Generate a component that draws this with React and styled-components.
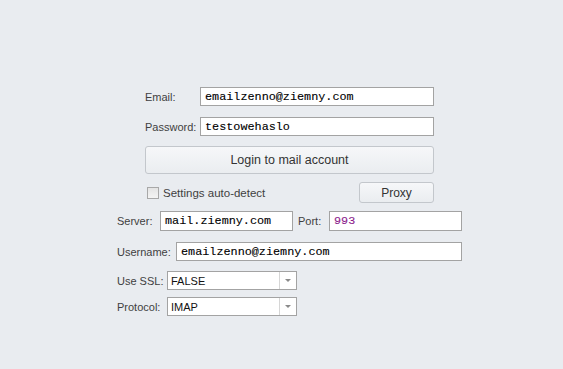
import React from 'react';
import styled, { createGlobalStyle } from 'styled-components';

const GlobalStyle = createGlobalStyle`
    html, body {
        margin: 0;
        background: #e9ecf0;
    }
    body {
        font-family: "Liberation Sans", Arial, sans-serif;
        font-size: 11px;
        color: #3c3c3c;
    }
`;

const Page = styled.div`
    width: 563px;
    height: 369px;
    padding-top: 87px;
    box-sizing: border-box;
`;

const Section = styled.div`
    display: flex;
    flex-direction: column;
    margin-left: ${p => p.left}px;
    width: ${p => p.width}px;
    margin-top: ${p => p.top || 0}px;
`;

const Row = styled.div`
    display: flex;
    align-items: center;
    height: ${p => p.h || 19}px;
    margin-top: ${p => p.top || 0}px;
`;

const Label = styled.label`
    box-sizing: border-box;
    width: ${p => p.w}px;
    padding-left: ${p => p.pad || 0}px;
    flex: none;
    color: #3f3f3f;
    white-space: nowrap;
`;

const Field = styled.div`
    box-sizing: border-box;
    height: ${p => p.h || 19}px;
    width: ${p => (p.w ? `${p.w}px` : 'auto')};
    flex: ${p => (p.w ? 'none' : '1')};
    background: #fff;
    border: 1px solid #a3a3a3;
    padding: 0 4px;
    display: flex;
    align-items: center;
    font-family: "Liberation Mono", "Courier New", monospace;
    font-size: 11.8px;
    color: ${p => p.color || '#000'};
    -webkit-text-stroke: 0.1px ${p => p.color || '#000'};
    white-space: nowrap;
    overflow: hidden;
`;

const Button = styled.button`
    box-sizing: border-box;
    height: ${p => p.h}px;
    width: ${p => (p.w ? `${p.w}px` : '100%')};
    margin-top: ${p => p.top || 0}px;
    border: 1px solid #c3c7cc;
    border-radius: 3px;
    background: linear-gradient(#f6f7f9, #eaedf0);
    font-family: "Liberation Sans", Arial, sans-serif;
    font-size: ${p => p.fs || 12}px;
    color: #333;
    padding: 0;
    cursor: pointer;
`;

const Options = styled.div`
    display: flex;
    align-items: center;
    justify-content: space-between;
    margin-top: 8px;
    height: 21px;
`;

const Check = styled.label`
    display: flex;
    align-items: center;
    gap: 4px;
    margin-left: 2px;
    color: #3f3f3f;
    font-size: 11.5px;
`;

const Box = styled.span`
    box-sizing: border-box;
    width: 12px;
    height: 12px;
    border: 1px solid #a8a8a8;
    background: linear-gradient(#e4e4e4, #f4f4f4);
`;

const Select = styled.div`
    box-sizing: border-box;
    width: 130px;
    height: 19px;
    background: #fff;
    border: 1px solid #a3a3a3;
    display: flex;
    align-items: stretch;
    color: #111;
`;

const SelectText = styled.span`
    flex: 1;
    display: flex;
    align-items: center;
    padding-left: 3px;
`;

const Arrow = styled.span`
    width: 16px;
    border-left: 1px solid #d6d6d6;
    display: flex;
    align-items: center;
    justify-content: center;
    &::after {
        content: '';
        border-left: 3px solid transparent;
        border-right: 3px solid transparent;
        border-top: 3px solid #8a8a8a;
    }
`;

export default function App() {
    return (
        <Page>
            <GlobalStyle />
            <Section left={145} width={289}>
                <Row>
                    <Label w={55}>Email:</Label>
                    <Field>emailzenno@ziemny.com</Field>
                </Row>
                <Row top={11}>
                    <Label w={55}>Password:</Label>
                    <Field>testowehaslo</Field>
                </Row>
                <Button h={28} top={10} fs={12.5}>Login to mail account</Button>
                <Options>
                    <Check><Box />Settings auto-detect</Check>
                    <Button h={21} w={75}>Proxy</Button>
                </Options>
            </Section>
            <Section left={117} width={345} top={8}>
                <Row h={20}>
                    <Label w={43}>Server:</Label>
                    <Field h={20} w={133}>mail.ziemny.com</Field>
                    <Label w={36} pad={5}>Port:</Label>
                    <Field h={20} color="#8b1a8b">993</Field>
                </Row>
                <Row top={11}>
                    <Label w={59}>Username:</Label>
                    <Field>emailzenno@ziemny.com</Field>
                </Row>
                <Row top={10}>
                    <Label w={50}>Use SSL:</Label>
                    <Select><SelectText>FALSE</SelectText><Arrow /></Select>
                </Row>
                <Row top={7}>
                    <Label w={50}>Protocol:</Label>
                    <Select><SelectText>IMAP</SelectText><Arrow /></Select>
                </Row>
            </Section>
        </Page>
    );
}
